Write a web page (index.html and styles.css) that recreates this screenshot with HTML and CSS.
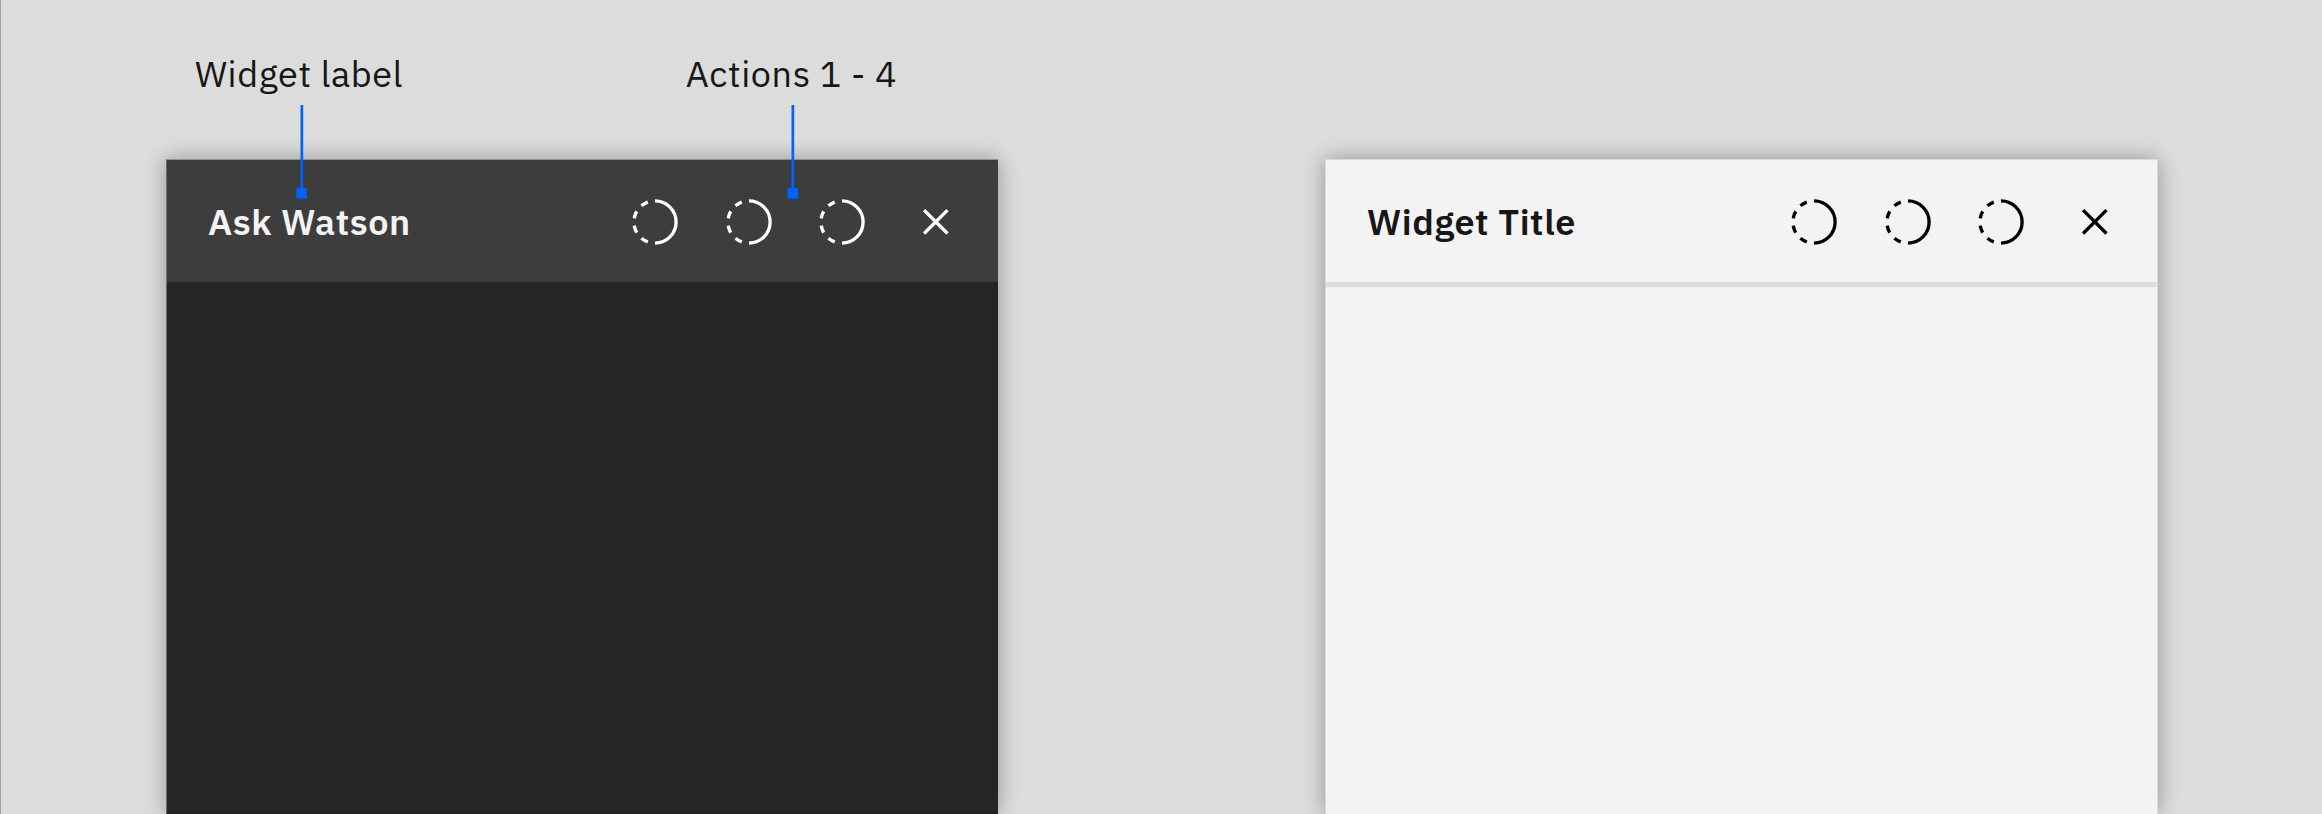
FILE: index.html
```html
<!DOCTYPE html>
<html lang="en">
<head>
<meta charset="utf-8">
<title>Widget header</title>
<link rel="stylesheet" href="styles.css">
</head>
<body>
<svg class="defs" width="0" height="0">
  <symbol id="dash" viewBox="0 0 52 52">
    <path d="M26 4.9a21.1 21.1 0 0 1 0 42.2M5.2 22.34A21.1 21.1 0 0 1 7.73 15.45M12.44 9.84A21.1 21.1 0 0 1 18.78 6.17M5.2 29.66A21.1 21.1 0 0 0 7.73 36.55M12.44 42.16A21.1 21.1 0 0 0 18.78 45.83"/>
  </symbol>
  <symbol id="close" viewBox="0 0 52 52">
    <path d="M14.1 14.1l23.4 23.4M37.5 14.1L14.1 37.5"/>
  </symbol>
</svg>
<main class="stage">
  <section class="widget dark">
    <header class="widget-header">
      <h2 class="title">Ask Watson</h2>
      <div class="actions">
        <svg class="icon"><use href="#dash"/></svg>
        <svg class="icon"><use href="#dash"/></svg>
        <svg class="icon"><use href="#dash"/></svg>
        <svg class="icon"><use href="#close"/></svg>
      </div>
    </header>
    <div class="callout callout-label"><span class="note">Widget label</span><svg class="pointer" viewBox="0 0 12 96"><path d="M4.5 1h2.7v83H4.5zM.4 84h10.4v10.5H.4z"/></svg></div>
    <div class="callout callout-actions"><span class="note">Actions 1 - 4</span><svg class="pointer" viewBox="0 0 12 96"><path d="M4.5 1h2.7v83H4.5zM.6 84H11v10.5H.6z"/></svg></div>
  </section>
  <section class="widget light">
    <header class="widget-header">
      <h2 class="title">Widget Title</h2>
      <div class="actions">
        <svg class="icon"><use href="#dash"/></svg>
        <svg class="icon"><use href="#dash"/></svg>
        <svg class="icon"><use href="#dash"/></svg>
        <svg class="icon"><use href="#close"/></svg>
      </div>
    </header>
  </section>
</main>
</body>
</html>
```
FILE: styles.css
```css
* { box-sizing: border-box; }
body {
  margin: 0;
  height: 814px;
  overflow: hidden;
  background: #dcdcdc;
  font-family: "IBM Plex Sans", "Open Sans", sans-serif;
}
.defs { display: block; height: 0; }
.stage {
  height: 814px;
  display: flex;
  gap: 327px;
  padding: 159px 164px 0 165px;
  border-left: 1px solid #a2a2a2;
  overflow: hidden;
}
.widget {
  position: relative;
  width: 832px;
  height: 655px;
  flex: none;
  border: 1px solid;
  border-bottom: 0;
  box-shadow: 0 0 20px rgba(0, 0, 0, .33);
}
.dark {
  background: #252525;
  border-color: #929292;
  border-left-color: #6c6c6c;
  border-right: 0;
  border-bottom: 1px solid #261c20;
}
.light { background: #f3f3f3; border-color: #dadada; width: 833px; }
.widget-header {
  height: 122px;
  display: flex;
  align-items: center;
  justify-content: space-between;
  padding: 2px 36px 0 41px;
}
.dark .widget-header { background: #3d3d3d; color: #f3f3f3; }
.light .widget-header { height: 127px; border-bottom: 5px solid #dcdcdc; color: #171717; }
.title {
  margin: 0;
  font-size: 36px;
  line-height: 48px;
  font-weight: 600;
  letter-spacing: .58px;
  white-space: nowrap;
}
.actions { display: flex; gap: 41.7px; }
.icon {
  width: 52px;
  height: 52px;
  fill: none;
  stroke: #fff;
  stroke-width: 3.3;
}
.light .icon { stroke: #000; }
.callout {
  position: absolute;
  top: -110px;
  display: flex;
  flex-direction: column;
  align-items: center;
  width: 240px;
}
.callout-label { left: 15px; }
.callout-actions { left: 506px; }
.note {
  height: 54px;
  margin-right: 6px;
  font-size: 36px;
  line-height: 48px;
  font-weight: 400;
  letter-spacing: .58px;
  color: #171717;
  white-space: nowrap;
}
.callout-actions .note { margin-right: 3px; }
.pointer { width: 12px; height: 96px; fill: #0062ff; }
```
